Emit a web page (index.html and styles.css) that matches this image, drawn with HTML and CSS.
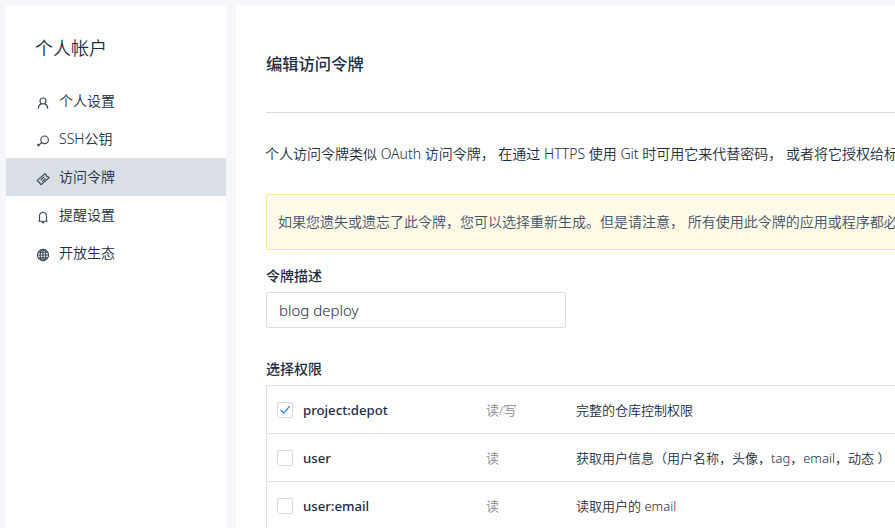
FILE: index.html
```html
<!DOCTYPE html>
<html lang="zh-CN">
<head>
<meta charset="utf-8">
<title>编辑访问令牌</title>
<link rel="stylesheet" href="styles.css">
</head>
<body>
<div class="layout">
  <aside class="sidebar">
    <h2 class="sidebar-title">个人帐户</h2>
    <nav class="menu">
      <a class="menu-item"><svg class="icon" viewBox="0 0 14 14"><circle cx="7" cy="5" r="3"/><path d="M2.4 12.7v-.9c0-1.9 1.2-3.3 3-3.9M11.6 12.7v-.9c0-1.9-1.2-3.3-3-3.9"/></svg><span>个人设置</span></a>
      <a class="menu-item"><svg class="icon" viewBox="0 0 14 14"><circle cx="8.6" cy="5.8" r="3.8"/><path d="M5.9 8.5 1.6 12M1.4 10l2 2.2"/></svg><span>SSH公钥</span></a>
      <a class="menu-item active"><svg class="icon" viewBox="0 0 14 14"><path d="M1.1 8.6 9 1.6l1.3 1.4c-.4 1 .4 1.8 1.4 1.4L13 5.7l-7.9 7-1.3-1.4c.4-1-.4-1.8-1.4-1.4zM4.7 8l3.5-3.1M6 9.6l3.5-3.1"/></svg><span>访问令牌</span></a>
      <a class="menu-item"><svg class="icon" viewBox="0 0 14 14"><path d="M3.5 11V6.4C3.5 4.1 5 2.5 7 2.5s3.5 1.6 3.5 3.9V11M2.3 11.2h9.4M7 1.4v1.1M5.7 12.6h2.6"/></svg><span>提醒设置</span></a>
      <a class="menu-item"><svg class="icon" viewBox="0 0 14 14"><circle cx="7" cy="7" r="5.6"/><ellipse cx="7" cy="7" rx="2.8" ry="5.6"/><path d="M7 1.4v11.2M1.4 7h11.2M2.3 4.2h9.4M2.3 9.8h9.4"/></svg><span>开放生态</span></a>
    </nav>
  </aside>
  <main class="content">
    <h1 class="page-title">编辑访问令牌</h1>
    <p class="intro">个人访问令牌类似 OAuth 访问令牌， 在通过 HTTPS 使用 Git 时可用它来代替密码， 或者将它授权给标</p>
    <div class="notice">如果您遗失或遗忘了此令牌，您可以选择重新生成。但是请注意， 所有使用此令牌的应用或程序都必</div>
    <label class="label" for="desc">令牌描述</label>
    <input class="field" id="desc" type="text" value="blog deploy">
    <h3 class="label scopes-label">选择权限</h3>
    <div class="scopes">
      <div class="scope"><span class="check"><svg viewBox="0 0 14 14"><path d="m2.7 7 3 3.2 6-7"/></svg></span><b class="name">project:depot</b><span class="access">读/写</span><span class="detail">完整的仓库控制权限</span></div>
      <div class="scope"><span class="check"></span><b class="name">user</b><span class="access">读</span><span class="detail">获取用户信息（用户名称，头像，tag，email，动态 ）</span></div>
      <div class="scope"><span class="check"></span><b class="name">user:email</b><span class="access">读</span><span class="detail">读取用户的 email</span></div>
    </div>
  </main>
</div>
</body>
</html>
```
FILE: styles.css
```css
* { box-sizing: border-box; }
body {
  margin: 0;
  height: 528px;
  overflow: hidden;
  background: #f5f7fb;
  color: #202d40;
  font: 14px/20px "Noto Sans", "Noto Sans CJK SC", sans-serif;
}
h1, h2, h3, p { margin: 0; }
.layout {
  display: flex;
  gap: 10px;
  height: 528px;
  padding: 5px 0 0 6px;
}
.sidebar {
  flex: 0 0 220px;
  background: #fff;
}
.sidebar-title {
  padding: 29px 29px 20px;
  font-size: 18px;
  font-weight: 350;
  line-height: 28px;
}
.menu-item {
  display: flex;
  align-items: center;
  gap: 9px;
  height: 38px;
  padding: 0 30px;
  font-weight: 350;
}
.active { background: #dadfe6; }
.icon {
  width: 14px;
  height: 14px;
  margin-top: 3px;
  fill: none;
  stroke: #3b475a;
  stroke-width: 1.15;
}
.content {
  flex: 1;
  min-width: 0;
  padding-left: 30px;
  overflow: hidden;
  background: #fff;
  white-space: nowrap;
}
.page-title {
  height: 108px;
  padding-top: 47px;
  border-bottom: 1px solid #d8dde4;
  font-size: 16.3px;
  line-height: 24px;
  font-weight: 500;
}
.intro {
  padding: 31px 0 30px;
  margin-left: -1px;
  font-weight: 350;
}
.notice {
  height: 56px;
  padding: 17px 11px;
  border: 1px solid #ffe58c;
  border-right: 0;
  border-radius: 2px 0 0 2px;
  background: #fffae6;
  color: #425068;
  font-weight: 350;
}
.label {
  display: block;
  padding-top: 16px;
  font-size: 14px;
  font-weight: 500;
}
.field {
  display: block;
  width: 300px;
  height: 36px;
  margin-top: 6px;
  padding: 0 12px;
  border: 1px solid #d8dde6;
  border-radius: 2px;
  color: #202d40;
  font: 350 15px "Noto Sans", "Noto Sans CJK SC", sans-serif;
}
.scopes-label { padding-top: 31px; }
.scopes {
  margin-top: 6px;
  border: 1px solid #dfe1e6;
  border-width: 1px 0 0 1px;
  border-radius: 2px 0 0 0;
}
.scope {
  display: grid;
  grid-template-columns: 26px 183px 90px 1fr;
  align-items: center;
  height: 48px;
  padding-left: 10px;
  border-bottom: 1px solid #dfe1e6;
  font-size: 13px;
}
.check {
  width: 16px;
  height: 16px;
  border: 1px solid #d5dae3;
  border-radius: 2px;
}
.check svg {
  display: block;
  width: 14px;
  height: 14px;
  fill: none;
  stroke: #2579ee;
  stroke-width: 1.2;
}
.name { font-weight: 500; font-size: 13.2px; }
.access { color: #808790; font-weight: 350; }
.detail { font-weight: 350; }
```
